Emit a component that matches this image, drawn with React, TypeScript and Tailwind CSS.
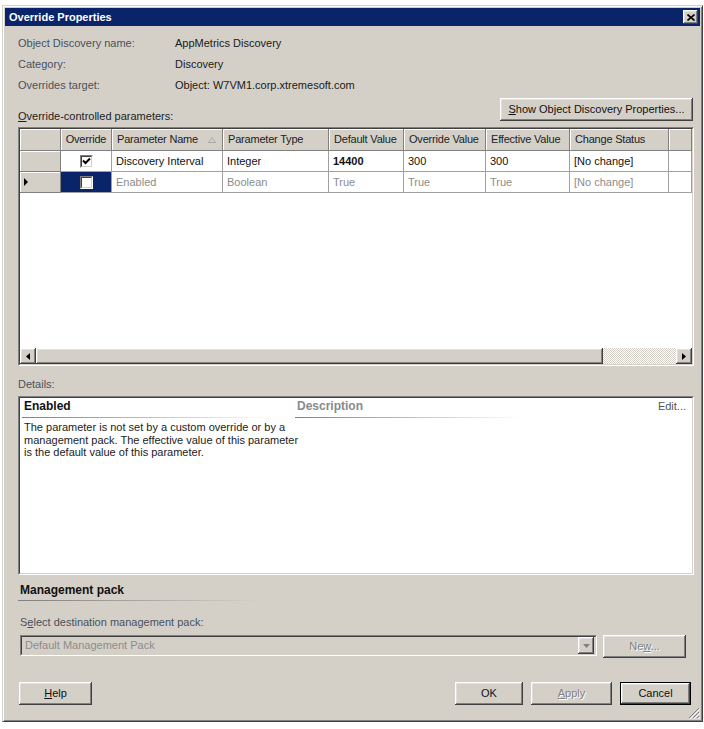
import React from "react";

const raised =
  "bg-[#d4d0c8] shadow-[inset_-1px_-1px_#404040,inset_1px_1px_#fff,inset_-2px_-2px_#808080,inset_2px_2px_#dfdfdf]";
const disabledText = "text-[#808080] [text-shadow:1px_1px_0_#fff]";

function Sunken({ className = "", inner = "", children }: { className?: string; inner?: string; children?: React.ReactNode }) {
  return (
    <div className={`border border-t-[#808080] border-l-[#808080] border-r-white border-b-white ${className}`}>
      <div className={`h-full border border-t-[#404040] border-l-[#404040] border-r-[#d4d0c8] border-b-[#d4d0c8] ${inner}`}>
        {children}
      </div>
    </div>
  );
}

function Checkbox({ checked }: { checked?: boolean }) {
  return (
    <Sunken className="w-[13px] h-[13px]" inner="bg-white flex items-center justify-center">
      {checked && (
        <svg width="9" height="9" viewBox="0 0 9 9">
          <path d="M1 3.5 L3.5 6 L8 1.5" stroke="#000" strokeWidth="2" fill="none" />
        </svg>
      )}
    </Sunken>
  );
}

function Button({
  label,
  className = "",
  disabled,
  isDefault,
}: {
  label: React.ReactNode;
  className?: string;
  disabled?: boolean;
  isDefault?: boolean;
}) {
  const inner = (
    <div className={`${raised} h-full w-full flex items-center justify-center ${disabled ? disabledText : "text-[#111]"}`}>
      {label}
    </div>
  );
  if (isDefault) return <div className={`border border-black ${className}`}>{inner}</div>;
  return <div className={className}>{inner}</div>;
}

const cols = [
  { name: "Override", w: "w-[51px]" },
  { name: "Parameter Name", w: "w-[111px]" },
  { name: "Parameter Type", w: "w-[106px]" },
  { name: "Default Value", w: "w-[75px]" },
  { name: "Override Value", w: "w-[82px]" },
  { name: "Effective Value", w: "w-[84px]" },
  { name: "Change Status", w: "w-[99px]" },
];

const headCell =
  "h-full bg-[#d4d0c8] border-r border-b border-r-[#808080] border-b-[#808080] shadow-[inset_1px_1px_#fff] flex items-center px-[5px] shrink-0 whitespace-nowrap overflow-hidden";
const cell = "h-full border-r border-b border-[#a0a0a0] flex items-center px-[4px] shrink-0 whitespace-nowrap";

function Row({ values, selected, enabled }: { values: string[]; selected?: boolean; enabled: boolean }) {
  const tx = enabled ? "text-[#111]" : "text-[#8c8c8c]";
  return (
    <div className="flex h-[21px]">
      <div className={`${headCell} w-[41px] pl-[4px]`}>
        {selected && (
          <svg width="5" height="8" viewBox="0 0 5 8">
            <path d="M0 0 L4 4 L0 8 Z" fill="#000" />
          </svg>
        )}
      </div>
      <div className={`${cell} w-[51px] justify-center ${selected ? "bg-[#0a246a]" : "bg-white"}`}>
        <Checkbox checked={enabled} />
      </div>
      {values.map((v, i) => (
        <div key={i} className={`${cell} ${cols[i + 1].w} ${tx} ${enabled && i === 2 ? "font-bold" : ""}`}>
          {v}
        </div>
      ))}
      <div className={`${cell} flex-1`} />
    </div>
  );
}

export default function App() {
  return (
    <div className="w-[704px] h-[729px] bg-white pt-[5px] pl-[2px] font-['Liberation_Sans',Arial,sans-serif] text-[11px] leading-[13px]">
      <div className="relative w-[701px] h-[717px] bg-[#d4d0c8] border border-t-[#d4d0c8] border-l-[#d4d0c8] border-r-[#404040] border-b-[#404040] shadow-[inset_1px_1px_#fff,inset_-1px_-1px_#808080] p-[2px] flex flex-col">
        {/* title bar */}
        <div className="h-[18px] bg-[#0a246a] flex items-center justify-between pl-[4px] pr-[2px]">
          <span className="text-white font-bold text-[11px]">Override Properties</span>
          <div className={`${raised} w-[15px] h-[14px] flex items-center justify-center`}>
            <svg width="8" height="7" viewBox="0 0 8 7">
              <path d="M0.5 0.5 L7.5 6.5 M7.5 0.5 L0.5 6.5" stroke="#000" strokeWidth="1.6" />
            </svg>
          </div>
        </div>

        <div className="flex-1 flex flex-col pl-[13px] pr-[6px] pt-[7px]">
          {[
            ["Object Discovery name:", "AppMetrics Discovery"],
            ["Category:", "Discovery"],
            ["Overrides target:", "Object: W7VM1.corp.xtremesoft.com"],
          ].map(([k, v]) => (
            <div key={k} className="h-[21px] flex items-center">
              <span className="w-[157px] text-[#4a505c]">{k}</span>
              <span className="text-[#1a1a1a]">{v}</span>
            </div>
          ))}

          <div className="mt-[2px] h-[23px] flex items-end justify-between">
            <span className="text-[#222] mb-[-2px]">
              <span className="underline underline-offset-[1px]">O</span>verride-controlled parameters:
            </span>
            <Button
              className="w-[193px] h-[23px] mr-[1px]"
              label={
                <span>
                  <span className="underline underline-offset-[1px]">S</span>how Object Discovery Properties...
                </span>
              }
            />
          </div>

          {/* grid */}
          <Sunken className="mt-[6px] h-[239px]" inner="bg-white flex flex-col">
            <div className="flex h-[22px] text-[#222] tracking-[-0.2px]">
              <div className={`${headCell} w-[41px]`} />
              {cols.map((c) => (
                <div key={c.name} className={`${headCell} ${c.w} ${c.name === "Override" ? "justify-center px-0" : ""}`}>
                  {c.name}
                  {c.name === "Parameter Name" && (
                    <svg className="ml-[10px] shrink-0" width="8" height="6" viewBox="0 0 8 6">
                      <path d="M0.5 5.5 L4 0.5 L7.5 5.5 Z" stroke="#a8a8a8" fill="none" />
                    </svg>
                  )}
                </div>
              ))}
              <div className={`${headCell} flex-1`} />
            </div>
            <Row enabled values={["Discovery Interval", "Integer", "14400", "300", "300", "[No change]"]} />
            <Row selected enabled={false} values={["Enabled", "Boolean", "True", "True", "True", "[No change]"]} />
            <div className="flex-1" />
            <div className="h-[16px] flex">
              <div className={`${raised} w-[16px] h-full flex items-center justify-center`}>
                <svg width="4" height="7" viewBox="0 0 4 7">
                  <path d="M4 0 L0 3.5 L4 7 Z" fill="#000" />
                </svg>
              </div>
              <div className={`${raised} w-[567px] h-full`} />
              <div className="flex-1 h-full bg-[repeating-conic-gradient(#d4d0c8_0_25%,#fff_0_50%)] bg-[length:2px_2px]" />
              <div className={`${raised} w-[16px] h-full flex items-center justify-center`}>
                <svg width="4" height="7" viewBox="0 0 4 7">
                  <path d="M0 0 L4 3.5 L0 7 Z" fill="#000" />
                </svg>
              </div>
            </div>
          </Sunken>

          <div className="mt-[12px] text-[#4a505c]">Details:</div>

          <Sunken className="mt-[5px] h-[179px]" inner="bg-white flex">
            <div className="w-[275px] pl-[2px]">
              <div className="pl-[2px] pt-[1px] font-bold text-[12px] leading-[15px] text-[#111]">Enabled</div>
              <div className="mt-[3px] h-px w-[250px] bg-gradient-to-r from-[#808080] to-white" />
              <div className="mt-[3px] pl-[2px] leading-[12.5px] text-[#222] whitespace-nowrap">
                The parameter is not set by a custom override or by a
                <br />
                management pack. The effective value of this parameter
                <br />
                is the default value of this parameter.
              </div>
            </div>
            <div className="flex-1 pr-[6px]">
              <div className="flex justify-between pt-[1px] leading-[15px]">
                <span className="pl-[2px] font-bold text-[12px] text-[#8a8a8a]">Description</span>
                <span className="text-[#555]">Edit...</span>
              </div>
              <div className="mt-[3px] h-px w-[225px] bg-gradient-to-r from-[#808080] to-white" />
            </div>
          </Sunken>

          <div className="mt-[8px] pl-[2px] font-bold text-[12px] leading-[15px] text-[#111]">Management pack</div>
          <div className="mt-[2px] h-px w-[240px] bg-gradient-to-r from-[#808080] to-[#d4d0c8]" />

          <div className="mt-[15px] pl-[2px] text-[#4a505c]">
            S<span className="underline underline-offset-[1px]">e</span>lect destination management pack:
          </div>

          <div className="mt-[6px] ml-[2px] flex items-start">
            <Sunken className="w-[577px] h-[21px]" inner="bg-[#d4d0c8] flex items-center justify-between pl-[3px] pr-[1px]">
              <span className="text-[#8c8c8c]">Default Management Pack</span>
              <div className={`${raised} w-[16px] h-[17px] flex items-center justify-center`}>
                <svg width="7" height="4" viewBox="0 0 7 4">
                  <path d="M0 0 L7 0 L3.5 4 Z" fill="#808080" />
                </svg>
              </div>
            </Sunken>
            <Button
              className="ml-[6px] w-[83px] h-[23px]"
              disabled
              label={
                <span>
                  Ne<span className="underline underline-offset-[1px]">w</span>...
                </span>
              }
            />
          </div>

          <div className="mt-[24px] flex items-start justify-between">
            <Button
              className="ml-[1px] w-[73px] h-[23px]"
              label={
                <span>
                  <span className="underline underline-offset-[1px]">H</span>elp
                </span>
              }
            />
            <div className="flex gap-[8px] mr-[3px]">
              <Button className="w-[68px] h-[23px]" label="OK" />
              <Button
                className="w-[81px] h-[23px]"
                disabled
                label={
                  <span>
                    <span className="underline underline-offset-[1px]">A</span>pply
                  </span>
                }
              />
              <Button className="w-[71px] h-[23px]" isDefault label="Cancel" />
            </div>
          </div>
        </div>

        {/* size grip */}
        <svg className="absolute right-[2px] bottom-[2px]" width="12" height="12" viewBox="0 0 12 12">
          <path d="M11 1 L1 11 M11 5 L5 11 M11 9 L9 11" stroke="#808080" strokeWidth="1" />
          <path d="M12 2 L2 12 M12 6 L6 12 M12 10 L10 12" stroke="#fff" strokeWidth="1" />
        </svg>
      </div>
    </div>
  );
}
